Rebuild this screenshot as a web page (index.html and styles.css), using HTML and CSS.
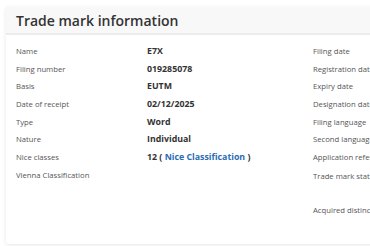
FILE: index.html
```html
<!DOCTYPE html>
<html lang="en">
<head>
    <meta charset="UTF-8">
    <meta name="viewport" content="width=device-width, initial-scale=1.0">
    <title>Trade mark information</title>
    <link rel="stylesheet" href="styles.css">
</head>
<body>
    <div class="card">
        <div class="card-header">
            <h2>Trade mark information</h2>
        </div>
        <div class="card-body">
            <div class="col col-left">
                <div class="row"><span class="label">Name</span><span class="value">E7X</span></div>
                <div class="row"><span class="label">Filing number</span><span class="value">019285078</span></div>
                <div class="row"><span class="label">Basis</span><span class="value">EUTM</span></div>
                <div class="row"><span class="label">Date of receipt</span><span class="value">02/12/2025</span></div>
                <div class="row"><span class="label">Type</span><span class="value">Word</span></div>
                <div class="row"><span class="label">Nature</span><span class="value">Individual</span></div>
                <div class="row"><span class="label">Nice classes</span><span class="value">12 ( <a href="#">Nice Classification</a> )</span></div>
                <div class="row"><span class="label">Vienna Classification</span><span class="value"></span></div>
            </div>
            <div class="col col-right">
                <div class="row"><span class="label">Filing date</span><span class="value"></span></div>
                <div class="row"><span class="label">Registration date</span><span class="value"></span></div>
                <div class="row"><span class="label">Expiry date</span><span class="value"></span></div>
                <div class="row"><span class="label">Designation date</span><span class="value"></span></div>
                <div class="row"><span class="label">Filing language</span><span class="value"></span></div>
                <div class="row"><span class="label">Second language</span><span class="value"></span></div>
                <div class="row"><span class="label">Application reference</span><span class="value"></span></div>
                <div class="row tall"><span class="label">Trade mark status</span><span class="value"></span></div>
                <div class="row"><span class="label">Acquired distinctiveness</span><span class="value"></span></div>
            </div>
        </div>
    </div>
</body>
</html>
```

FILE: styles.css
```css
body {
    font-family: "Open Sans", sans-serif;
    margin: 0;
    padding: 0;
    background: white;
    overflow: hidden;
    width: 370px;
    height: 246px;
}
.card {
    margin: 7px 0 0 6px;
    width: 460px;
    background: white;
    border-radius: 3px;
    box-shadow: 0px 1px 4px rgba(0, 0, 0, 0.1);
}
.card-header {
    height: 26px;
    padding-left: 10px;
    background: #f8f8f8;
    border-bottom: 2px solid #ececec;
    display: flex;
    align-items: center;
}
.card-header h2 {
    margin: 0;
    font-size: 14px;
    font-weight: 600;
    color: #333;
}
.card-body {
    display: flex;
    padding: 7px 0 25px 10px;
}
.col-left {
    width: 297px;
}
.row {
    display: flex;
    height: 17.7px;
    align-items: center;
    font-size: 7.7px;
}
.row.tall {
    height: 35.4px;
    align-items: flex-start;
    padding-top: 5px;
    box-sizing: border-box;
}
.col-left .label {
    width: 131px;
}
.col-right .label {
    width: 120px;
}
.label {
    color: #555;
}
.value {
    color: #333;
    font-weight: bold;
    font-size: 8.8px;
}
.value a {
    color: #2a6db5;
    text-decoration: none;
}
```
